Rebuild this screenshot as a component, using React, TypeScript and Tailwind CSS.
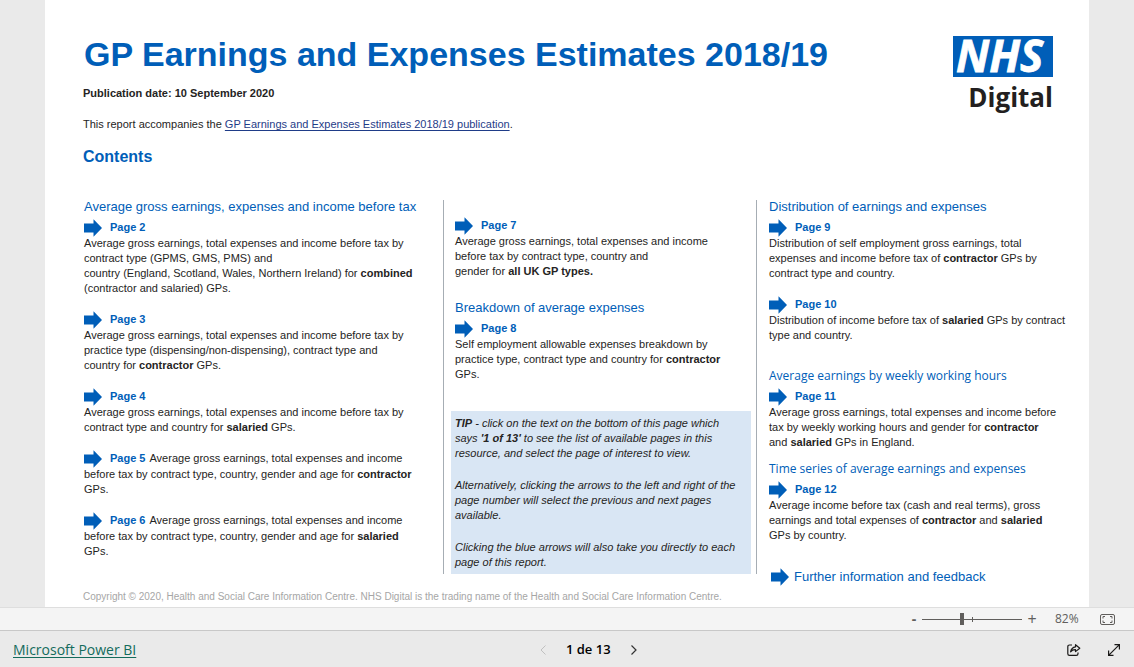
import React from "react";

function Arrow() {
  return (
    <svg viewBox="0 0 18 18" className="h-[18px] w-[18px] shrink-0" aria-hidden="true">
      <path d="M0 4.5H9.5V0.3L18 9L9.5 17.7V13.5H0Z" fill="#005eb8" />
    </svg>
  );
}

type EntryProps = {
  page: number;
  lead?: React.ReactNode;
  children: React.ReactNode;
};

function Entry({ page, lead, children }: EntryProps) {
  return (
    <section>
      <div className="flex h-[17px] items-center whitespace-nowrap">
        <a href={`#page-${page}`} className="flex items-center gap-2 font-bold text-[#005eb8]">
          <Arrow />
          Page {page}
        </a>
        {lead && <span className="ml-1">{lead}</span>}
      </div>
      <p className="whitespace-nowrap">{children}</p>
    </section>
  );
}

function Heading({ children, humanist = false }: { children: React.ReactNode; humanist?: boolean }) {
  return (
    <h3
      className={
        humanist
          ? "whitespace-nowrap font-['Open_Sans','Noto_Sans',sans-serif] text-xs leading-6 text-[#005eb8]"
          : "whitespace-nowrap text-[13px] leading-6 text-[#005eb8]"
      }
    >
      {children}
    </h3>
  );
}

function Logo() {
  return (
    <div className="flex w-[100px] flex-col items-end font-['Open_Sans','Noto_Sans',sans-serif]">
      <svg viewBox="0 0 100 41" className="h-[41px] w-[100px] overflow-visible" role="img" aria-label="NHS">
        <rect width="100" height="41" fill="#005eb8" />
        <text x="3" y="36" fontSize="44" fill="#fff" stroke="#fff" strokeWidth="0.8" className="font-bold italic">
          NHS
        </text>
      </svg>
      <span className="text-[26px] leading-10 font-bold text-[#231f20]">Digital</span>
    </div>
  );
}

function Report() {
  return (
    <main className="flex-1 bg-white pl-[38px] pr-2 pt-8 text-[11px] leading-4 text-[#252423]">
      <header className="flex items-start justify-between pr-7">
        <div>
          <h1 className="whitespace-nowrap pl-px text-[34px] leading-[44px] font-bold text-[#005eb8]">
            GP Earnings and Expenses Estimates 2018/19
          </h1>
          <p className="mt-[9px] font-bold">Publication date: 10 September 2020</p>
          <p className="mt-[15px]">
            This report accompanies the{" "}
            <a href="#publication" className="text-[#1f3c88] underline underline-offset-2">
              GP Earnings and Expenses Estimates 2018/19 publication
            </a>
            .
          </p>
          <h2 className="mt-[13px] text-base leading-6 font-bold text-[#005eb8]">Contents</h2>
        </div>
        <div className="pt-1">
          <Logo />
        </div>
      </header>

      <div className="mt-[25px] grid grid-cols-[360fr_314fr_324fr] leading-[15px]">
        <div className="flex flex-col gap-[15px] pl-px pt-px">
          <div>
            <Heading>Average gross earnings, expenses and income before tax</Heading>
            <Entry page={2}>
              Average gross earnings, total expenses and income before tax by
              <br />
              contract type (GPMS, GMS, PMS) and
              <br />
              country (England, Scotland, Wales, Northern Ireland) for <b>combined</b>
              <br />
              (contractor and salaried) GPs.
            </Entry>
          </div>
          <Entry page={3}>
            Average gross earnings, total expenses and income before tax by
            <br />
            practice type (dispensing/non-dispensing), contract type and
            <br />
            country for <b>contractor</b> GPs.
          </Entry>
          <Entry page={4}>
            Average gross earnings, total expenses and income before tax by
            <br />
            contract type and country for <b>salaried</b> GPs.
          </Entry>
          <Entry page={5} lead="Average gross earnings, total expenses and income">
            before tax by contract type, country, gender and age for <b>contractor</b>
            <br />
            GPs.
          </Entry>
          <Entry page={6} lead="Average gross earnings, total expenses and income">
            before tax by contract type, country, gender and age for <b>salaried</b>
            <br />
            GPs.
          </Entry>
        </div>

        <div className="mt-1.5 self-start border-x border-[#a6adb4] pl-[7px] pr-[5px]">
          <div className="pl-1 pt-[17px]">
            <Entry page={7}>
              Average gross earnings, total expenses and income
              <br />
              before tax by contract type, country and
              <br />
              gender for <b>all UK GP types.</b>
            </Entry>
            <div className="mt-[17px]">
              <Heading>Breakdown of average expenses</Heading>
              <Entry page={8}>
                Self employment allowable expenses breakdown by
                <br />
                practice type, contract type and country for <b>contractor</b>
                <br />
                GPs.
              </Entry>
            </div>
          </div>
          <aside className="mt-[29px] whitespace-nowrap bg-[#d9e6f4] px-1 pb-1 pt-[5px] italic">
            <p>
              <b>TIP</b> - click on the text on the bottom of this page which
              <br />
              says <b>'1 of 13'</b> to see the list of available pages in this
              <br />
              resource, and select the page of interest to view.
            </p>
            <p className="mt-[17px]">
              Alternatively, clicking the arrows to the left and right of the
              <br />
              page number will select the previous and next pages
              <br />
              available.
            </p>
            <p className="mt-[17px]">
              Clicking the blue arrows will also take you directly to each
              <br />
              page of this report.
            </p>
          </aside>
        </div>

        <div className="pl-3 pt-px">
          <Heading>Distribution of earnings and expenses</Heading>
          <Entry page={9}>
            Distribution of self employment gross earnings, total
            <br />
            expenses and income before tax of <b>contractor</b> GPs by
            <br />
            contract type and country.
          </Entry>
          <div className="mt-[15px]">
            <Entry page={10}>
              Distribution of income before tax of <b>salaried</b> GPs by contract
              <br />
              type and country.
            </Entry>
          </div>
          <div className="mt-[21px]">
            <Heading humanist>Average earnings by weekly working hours</Heading>
            <Entry page={11}>
              Average gross earnings, total expenses and income before
              <br />
              tax by weekly working hours and gender for <b>contractor</b>
              <br />
              and <b>salaried</b> GPs in England.
            </Entry>
          </div>
          <div className="mt-[7px]">
            <Heading humanist>Time series of average earnings and expenses</Heading>
            <Entry page={12}>
              Average income before tax (cash and real terms), gross
              <br />
              earnings and total expenses of <b>contractor</b> and <b>salaried</b>
              <br />
              GPs by country.
            </Entry>
          </div>
          <a
            href="#further-information"
            className="mt-[22px] flex items-center gap-[5px] whitespace-nowrap pl-0.5 text-[13px] leading-6 text-[#005eb8]"
          >
            <Arrow />
            Further information and feedback
          </a>
        </div>
      </div>
      <p className="pb-[3px] text-[10px] leading-[15px] text-[#a6a6a6]">
        Copyright © 2020, Health and Social Care Information Centre. NHS Digital is the trading name of the Health and
        Social Care Information Centre.
      </p>
    </main>
  );
}

function ZoomBar() {
  const [zoom, setZoom] = React.useState(82);
  return (
    <div className="flex h-6 items-center justify-end border-y border-b-[#c8c8c8] border-t-[#dedede] bg-[#f4f4f4] pr-[19px] text-[#605e5c]">
      <button
        aria-label="Zoom out"
        className="w-4 text-center text-sm leading-5 font-bold"
        onClick={() => setZoom(Math.max(10, zoom - 10))}
      >
        -
      </button>
      <div className="relative flex h-3 w-[100px] items-center">
        <span className="absolute left-1/2 top-1 h-[5px] w-px bg-[#605e5c]" />
        <input
          type="range"
          aria-label="Zoom"
          min={10}
          max={190}
          value={zoom}
          onChange={(e) => setZoom(Number(e.target.value))}
          className="h-3 w-full appearance-none bg-transparent bg-[linear-gradient(#605e5c,#605e5c)] bg-[length:100%_1px] bg-center bg-no-repeat [&::-webkit-slider-thumb]:h-3 [&::-webkit-slider-thumb]:w-1 [&::-webkit-slider-thumb]:appearance-none [&::-webkit-slider-thumb]:bg-[#605e5c]"
        />
      </div>
      <button
        aria-label="Zoom in"
        className="w-5 text-center text-base leading-5"
        onClick={() => setZoom(Math.min(190, zoom + 10))}
      >
        +
      </button>
      <output className="ml-[13px] w-[26px] text-xs">{zoom}%</output>
      <button aria-label="Fit to page" className="ml-[19px]">
        <svg viewBox="0 0 15 11" className="h-[11px] w-[15px]" fill="none" stroke="#605e5c">
          <rect x="0.5" y="0.5" width="14" height="10" rx="1.5" />
          <path d="M5 2.5H3V4.5M3 6.5V8.5H5M10 2.5H12V4.5M12 6.5V8.5H10" />
        </svg>
      </button>
    </div>
  );
}

function Footer() {
  return (
    <footer className="grid h-9 grid-cols-[109fr_auto_100fr] items-center bg-[#eaeaea] pl-[13px] pr-[14px] pt-0.5">
      <a
        href="https://powerbi.microsoft.com"
        className="justify-self-start text-sm text-[#136b5c] underline underline-offset-2"
      >
        Microsoft Power BI
      </a>
      <nav aria-label="Pages" className="flex items-center gap-5 text-[13px] font-semibold text-black">
        <button aria-label="Previous page" disabled>
          <svg viewBox="0 0 6 10" className="h-[10px] w-[6px]" fill="none" stroke="#c0c0c0">
            <path d="M5.5 0.5L1 5L5.5 9.5" />
          </svg>
        </button>
        <span>1 de 13</span>
        <button aria-label="Next page">
          <svg viewBox="0 0 6 10" className="h-[10px] w-[6px]" fill="none" stroke="#333" strokeWidth="1.2">
            <path d="M0.5 0.5L5 5L0.5 9.5" />
          </svg>
        </button>
      </nav>
      <div className="flex items-center gap-[27px] justify-self-end">
        <button aria-label="Share">
          <svg viewBox="0 0 14 12" className="h-3 w-[14px]" fill="none" stroke="#1b1a19" strokeWidth="1.2">
            <path d="M5 1H2.5Q0.8 1 0.8 2.7V9.7Q0.8 11.4 2.5 11.4H9.3Q11 11.4 11 9.7V8.5" />
            <path d="M8.5 0.7L12.8 4.2L8.5 7.6V5.6Q5.5 5.4 3.6 7.8Q4.4 3.4 8.5 2.8Z" strokeLinejoin="round" />
          </svg>
        </button>
        <button aria-label="Full screen">
          <svg viewBox="0 0 12 12" className="h-3 w-3" fill="none" stroke="#1b1a19" strokeWidth="1.2">
            <path d="M0.6 11.4L11.4 0.6M6.5 0.6H11.4V5.5M0.6 6.5V11.4H5.5" />
          </svg>
        </button>
      </div>
    </footer>
  );
}

export default function App() {
  return (
    <div className="flex min-h-screen flex-col bg-[#eaeaea] font-['Open_Sans','Noto_Sans',sans-serif]">
      <div className="flex flex-1 px-[45px] font-['Liberation_Sans',Arial,sans-serif]">
        <Report />
      </div>
      <ZoomBar />
      <Footer />
    </div>
  );
}
